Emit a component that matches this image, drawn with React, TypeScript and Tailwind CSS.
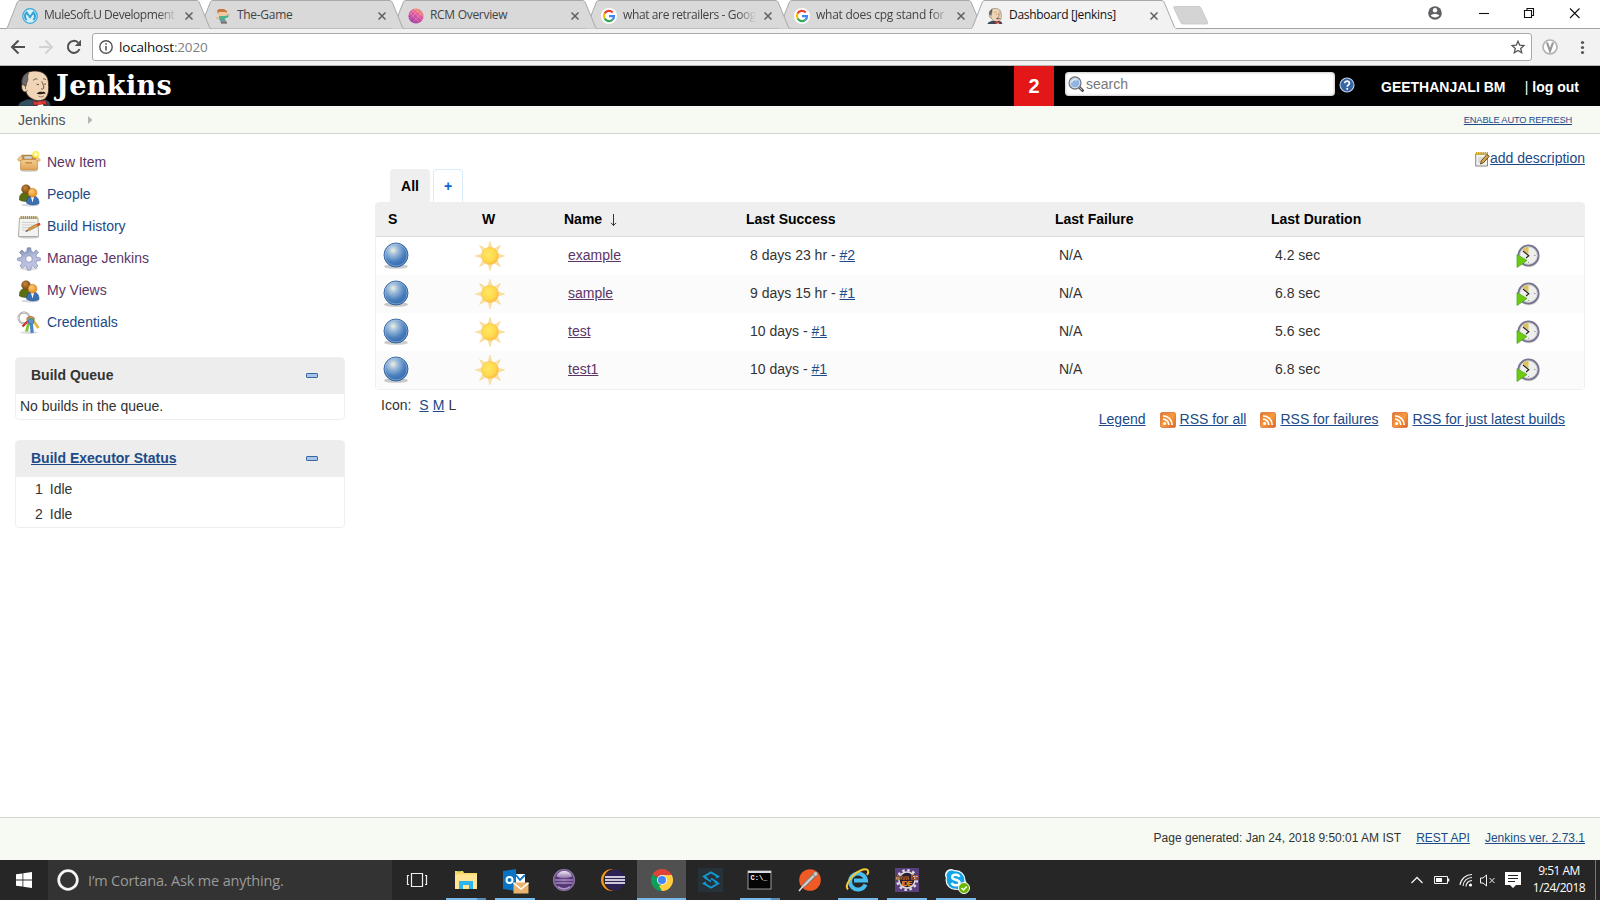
import type { ReactNode } from "react";

const JenkinsHead = ({ className, collar = true }: { className?: string; collar?: boolean }) => (
  <svg viewBox="0 0 33 36" className={className}>
    <path d="M0 36 L2 32.500 L9 29.500 L26 29 L31 31.500 L32.500 36Z" fill="#335061" stroke="#1b2a33" strokeWidth=".6" />
    <path d="M4 14 C2.500 5 10 .8 17 1 C26 1 30.500 6 30.500 14 C30.800 19 31 23 28.500 27 C26 31 19 31.500 15.500 29.500 C11 27.500 9 25 8 22 C4.500 22.500 2.800 18 4 14Z" fill="#f0d6b7" stroke="#33241c" strokeWidth=".8" />
    <path d="M4 14.500 C3.400 8 6.500 4.500 10.500 3 C8.500 7 11 9 9 12 C8.200 14 8.500 15.500 7.600 16.500 C6.500 14 5.500 14 4 14.500Z" fill="#6d6b6d" stroke="#2a2a2a" strokeWidth=".6" />
    <path d="M5 15.500 C6.500 14.500 7.800 16 7.500 19 M8 22 L9.500 20" fill="none" stroke="#49392a" strokeWidth=".7" />
    <path d="M15 10.500 C16.500 8.800 18 8.500 19.500 9.300 M25 9 C26.200 8.600 27.200 9 28 10 M18.500 14.200 L21 14.800 M25.800 14.200 L28 14 M23.800 11.500 C24.800 14 26.500 17 25.500 18.500 C24.500 19.500 23.500 19 23 18.700" fill="none" stroke="#4b3526" strokeWidth=".8" />
    <path d="M18.500 23.500 C20.500 21.500 23 21.500 24.500 22 C26.500 21.500 27.500 22.500 27.500 23.700 C25 23.500 21 25 18.500 23.500Z" fill="#2c2019" />
    <path d="M20.500 26 C22.500 27.500 25 27 26 25.500" fill="none" stroke="#7b4937" strokeWidth=".7" />
    {collar && <path d="M20 33 L24.500 33 L25.500 36 L19.500 36Z" fill="#fff" />}
    <path d="M14.500 31 L20.500 32 L27.500 30 L29 35 L24 34 L21.500 34.500 L16 35.500Z" fill="#d33833" stroke="#5f1512" strokeWidth=".5" />
    <rect x="20.500" y="31.500" width="3" height="3" fill="#ef3d3a" />
  </svg>
);

const MuleIcon = () => (
  <svg viewBox="0 0 16 16" className="size-4">
    <circle cx="8" cy="8" r="7.300" fill="#d7eef8" stroke="#35a9dc" strokeWidth="1.200" />
    <path d="M4.700 12 A5 5 0 0 1 4.600 4.500 L8 9.200 L11.400 4.500 A5 5 0 0 1 11.300 12" fill="none" stroke="#2f9fd4" strokeWidth="1.900" />
  </svg>
);

const GameIcon = () => (
  <svg viewBox="0 0 16 16" className="size-4">
    <path d="M2 2.500 L4 1 L9 1 L12 3 L12 5 L3 6Z" fill="#c9773f" />
    <rect x="3.500" y="4" width="8" height="4.200" fill="#f1c8a0" />
    <path d="M4 8 L10 8 L13.500 7 L13.500 9 L10 10.500 L10 12 L4 12Z" fill="#4cb08c" />
    <rect x="12" y="5.500" width="2.500" height="1.800" fill="#e9b98f" />
    <rect x="1" y="9" width="3.500" height="1.600" fill="#e9b98f" />
    <path d="M5 12 L10.500 12 L12 14.500 L5.500 14.500Z" fill="#7f8fa3" />
    <path d="M6 14.300 h6 v1.200 h-6z" fill="#5d5148" />
  </svg>
);

const RcmIcon = () => (
  <svg viewBox="0 0 16 16" className="size-4">
    <defs>
      <linearGradient id="rcm" x1=".8" y1="0" x2=".2" y2="1">
        <stop offset="0" stopColor="#f0a15a" />
        <stop offset=".4" stopColor="#e4589c" />
        <stop offset="1" stopColor="#9a3fa8" />
      </linearGradient>
    </defs>
    <circle cx="8" cy="8" r="7.600" fill="url(#rcm)" />
    <path d="M2 5 L11 14 M4 2.500 L14 12 M7 1 L15 8.500 M14 4 L5 14.500 M11 1.500 L2 11 M7.500 1 L1 7.500" stroke="#fff" strokeOpacity=".3" strokeWidth=".7" />
  </svg>
);

const GoogleIcon = () => (
  <svg viewBox="0 0 16 16" className="size-4">
    <circle cx="8" cy="8" r="8" fill="#fff" />
    <g fill="none" strokeWidth="2.200">
      <path d="M3.500 5.600 A5.100 5.100 0 0 1 11.700 4.400" stroke="#ea4335" />
      <path d="M3.600 10.500 A5.100 5.100 0 0 1 3.500 5.600" stroke="#fbbc05" />
      <path d="M11.500 11.800 A5.100 5.100 0 0 1 3.600 10.500" stroke="#34a853" />
      <path d="M8 8.200 H13 A5.100 5.100 0 0 1 11.500 11.800" stroke="#4285f4" />
    </g>
  </svg>
);

const fade = "[mask-image:linear-gradient(to_right,black_86%,transparent_100%)]";

const tabs: { title: string; icon: ReactNode; z: string; text: string; active?: boolean }[] = [
  { title: "MuleSoft.U Development", icon: <MuleIcon />, z: "z-[5]", text: `text-[#444] tracking-[-0.45px] ${fade}` },
  { title: "The-Game", icon: <GameIcon />, z: "z-[4]", text: "text-[#444] tracking-[-0.3px]" },
  { title: "RCM Overview", icon: <RcmIcon />, z: "z-[3]", text: "text-[#444] tracking-[-0.3px]" },
  { title: "what are retrailers - Goog", icon: <GoogleIcon />, z: "z-[2]", text: `text-[#444] tracking-[-0.38px] ${fade}` },
  { title: "what does cpg stand for", icon: <GoogleIcon />, z: "z-[1]", text: `text-[#444] tracking-[-0.26px] ${fade}` },
  { title: "Dashboard [Jenkins]", icon: <JenkinsHead className="size-4" />, z: "z-[6]", text: "text-[#111] tracking-[-0.3px]", active: true },
];

const TabStrip = () => (
  <div className="flex h-[29px] border-b border-[#a3a3a3] bg-white pl-1.5">
    {tabs.map((t) => (
      <div key={t.title} className={`relative flex h-[29px] w-[193px] shrink-0 items-center pl-4 ${t.z}`}>
        <svg viewBox="0 0 206 29" className="absolute left-0 top-0 h-[29px] w-[206px]">
          <path
            d="M0 28.500 C1 28.500 1.500 27.500 2 26 L11 3 C12 1 12.500 .5 14 .5 H190 C192 .5 192.500 1 193.500 3 L203 26 C203.500 27.500 204 28.500 205.500 28.500"
            fill={t.active ? "#f2f2f2" : "#d9d9d9"}
            stroke="#a9a9a9"
          />
          {t.active && <path d="M1 28.500 H204.500" stroke="#f2f2f2" strokeWidth="1.400" />}
        </svg>
        <span className="relative mt-0.5">{t.icon}</span>
        <span className={`relative ml-1.5 w-[133px] overflow-hidden whitespace-nowrap font-['Open_Sans',sans-serif] text-[12px] leading-4 ${t.text}`}>
          {t.title}
        </span>
        <svg viewBox="0 0 8 8" className="relative ml-2 mt-0.5 size-2 shrink-0">
          <path d="M.5 .5 L7.500 7.500 M7.500 .5 L.5 7.500" stroke="#5f5f5f" strokeWidth="1.500" />
        </svg>
      </div>
    ))}
    <svg viewBox="0 0 36 19" className="ml-[9px] mt-1.5 h-[19px] w-9">
      <path d="M2 .5 H25 C27 .5 27.500 1 28.500 3 L34.500 16 C35 17.500 34.500 18 33.500 18 H10.500 C9 18 8 17.500 7.500 16 L.8 2 C.5 1 1 .5 2 .5Z" fill="#d4d4d4" stroke="#c4c4c4" strokeWidth=".8" />
    </svg>
    <div className="ml-auto flex">
      <svg viewBox="0 0 166 28" className="h-7 w-[166px] overflow-visible">
        <circle cx="1" cy="13" r="6.800" fill="#5f6063" />
        <circle cx="1" cy="10.200" r="2.200" fill="#fff" />
        <path d="M-3.300 15.600 C-2.500 13.400 4.500 13.400 5.300 15.600 C4 18 -2 18 -3.300 15.600Z" fill="#fff" />
        <g fill="none" stroke="#111" strokeWidth="1.100">
          <path d="M45 13.500 H55" />
          <path d="M90.500 10.500 H97.500 V17.500 H90.500Z M93 10.500 V8.500 H99.500 V15.500 H97.500" />
          <path d="M136 8.500 L145.500 18 M145.500 8.500 L136 18" />
        </g>
      </svg>
    </div>
  </div>
);

const AddressBar = () => (
  <div className="flex h-[37px] items-center border-b border-[#b6b6b6] bg-[#f2f2f2]">
    <svg viewBox="0 0 92 36" className="h-9 w-[92px] shrink-0" fill="none" strokeWidth="2">
      <path d="M25 18 H12.500 M18.500 11.500 L12 18 L18.500 24.500" stroke="#505050" />
      <path d="M39 18 H52 M45.500 11.500 L52 18 L45.500 24.500" stroke="#d2d2d2" />
      <path d="M79.500 20 A6 6 0 1 1 78 13.500" stroke="#505050" />
      <path d="M81 10.800 V17 H74.800Z" fill="#505050" stroke="none" />
    </svg>
    <div className="flex h-7 w-[1440px] shrink-0 items-center rounded-[3px] border border-[#a9a9a9] bg-white pl-1.5 pr-1.5">
      <svg viewBox="0 0 14 14" className="size-[14px]">
        <circle cx="7" cy="7" r="6.200" fill="none" stroke="#555" strokeWidth="1.400" />
        <path d="M7 6 V10.500 M7 3.200 V4.800" stroke="#555" strokeWidth="1.600" />
      </svg>
      <span className="ml-1.5 font-['Open_Sans',sans-serif] text-[13.500px] leading-[18px] tracking-[-0.18px] text-[#111]">
        localhost<span className="text-[#808080]">:2020</span>
      </span>
      <svg viewBox="0 0 14 14" className="ml-auto size-[14px]">
        <path d="M7 1.200 L8.700 5.200 L13 5.600 L9.700 8.400 L10.700 12.700 L7 10.400 L3.300 12.700 L4.300 8.400 L1 5.600 L5.300 5.200Z" fill="none" stroke="#555" strokeWidth="1.300" />
      </svg>
    </div>
    <svg viewBox="0 0 68 36" className="h-9 w-[68px]">
      <circle cx="18" cy="18" r="7" fill="#fff" stroke="#b3b3b3" strokeWidth="1.700" />
      <path d="M15 13.500 L18 22 L21 13.500" fill="none" stroke="#989898" strokeWidth="2.200" />
      <g fill="#555">
        <circle cx="50.500" cy="13.500" r="1.600" />
        <circle cx="50.500" cy="18.500" r="1.600" />
        <circle cx="50.500" cy="23.500" r="1.600" />
      </g>
    </svg>
  </div>
);

const Header = () => (
  <header className="flex h-10 bg-black text-white">
    <JenkinsHead className="ml-[18px] mt-1 h-9 w-[33px] shrink-0" />
    <span className="ml-[5px] w-[125px] pt-px font-['DejaVu_Serif',serif] text-[27px] font-bold leading-[37px] tracking-[0.4px]">Jenkins</span>
    <span className="ml-auto flex size-10 items-center justify-center bg-[#e31717] text-[20px] font-bold">2</span>
    <div className="ml-[11px] mt-1.5 flex h-6 w-[270px] items-center rounded bg-white pl-[3px] shadow-[inset_0_0_3px_#999]">
      <svg viewBox="0 0 16 16" className="size-4">
        <path d="M10.500 10.500 L14.500 14.500" stroke="#555" strokeWidth="3" strokeLinecap="round" />
        <path d="M11 11 L14 14" stroke="#bbb" strokeWidth="1" />
        <circle cx="7" cy="7" r="6" fill="#8fb4de" stroke="#777" strokeWidth="1.300" />
        <circle cx="7" cy="7" r="4.800" fill="none" stroke="#dfe9f4" strokeWidth=".9" />
        <path d="M3.500 6.500 C4 4 7 3 9 4.200" fill="none" stroke="#e5effa" strokeWidth="1.400" />
      </svg>
      <span className="ml-[2px] text-[14px] leading-4 text-[#777]">search</span>
    </div>
    <svg viewBox="0 0 16 16" className="ml-1 mt-[11px] size-4">
      <circle cx="8" cy="8" r="7" fill="#3465a4" stroke="#c3d3e8" strokeWidth="1.100" />
      <path d="M5.700 6.200 C5.700 3.300 10.500 3.400 10.400 6.200 C10.400 7.900 8.200 8 8.200 9.800 M8.200 11 V12.700" fill="none" stroke="#fff" strokeWidth="1.700" />
    </svg>
    <div className="ml-[26px] mr-[21px] flex w-[198px] justify-between pt-[13px] text-[14px] font-bold leading-4">
      <span>GEETHANJALI BM</span>
      <span>
        <span className="font-normal">|</span> log out
      </span>
    </div>
  </header>
);

const People = () => (
  <>
    <ellipse cx="13" cy="22" rx="9" ry="1.500" fill="#000" opacity=".15" />
    <path d="M2.500 17 C2 11.500 5 9.500 8.500 9.500 C11 9.500 14 12 14 17.500 C10 19 5 18.500 2.500 17Z" fill="#5a6e14" stroke="#3f4d0b" strokeWidth=".6" />
    <circle cx="9" cy="6.200" r="4.400" fill="url(#brownHead)" stroke="#70430c" strokeWidth=".5" />
    <path d="M9.500 20 C9.500 14.500 12 13 15.500 13 C20 13 22 15.500 22 20.500 C18 22.500 13 22.500 9.500 20Z" fill="#3a70b3" stroke="#1f4a87" strokeWidth=".6" />
    <path d="M14 14 L15.500 19.500 L17 14Z" fill="#fff" />
    <circle cx="15.500" cy="9.700" r="4.400" fill="url(#orangeHead)" stroke="#c87408" strokeWidth=".5" />
  </>
);

const sideIcons: Record<string, ReactNode> = {
  box: (
    <>
      <ellipse cx="12" cy="19.800" rx="9" ry="1.300" fill="#000" opacity=".15" />
      <path d="M5 4 H19.500 L21 9 H3Z" fill="#c98a3e" stroke="#b57d35" strokeWidth=".5" />
      <path d="M7 5 H15 V8 H7Z" fill="#dcd8d0" stroke="#85796a" strokeWidth=".5" />
      <path d="M3.500 8.500 H20.500 V18 Q20.500 19 19.500 19 H4.500 Q3.500 19 3.500 18Z" fill="url(#boxFace)" stroke="#bd8238" strokeWidth=".6" />
      <path d="M5 4 L.5 8 L1.500 10 L5.500 9 Z M19.500 5 L23.500 9 L22 10.500 L18.500 9Z" fill="#f0c78b" stroke="#bd8238" strokeWidth=".5" />
      <path d="M8.500 11 H15 V12.600 H8.500Z" fill="#c98d48" />
      <circle cx="18.700" cy="3.500" r="3.600" fill="#fdf23a" opacity=".85" />
      <circle cx="18.700" cy="3.500" r="1.700" fill="#fffde0" />
    </>
  ),
  people: <People />,
  note: (
    <>
      <ellipse cx="12" cy="22.300" rx="10" ry="1.200" fill="#000" opacity=".2" />
      <path d="M2.500 3 H21 L21.500 21.500 H1.500Z" fill="#f3f3f1" stroke="#999b96" strokeWidth=".8" />
      <path d="M3.500 2.500 H20.500" stroke="#a8923a" strokeWidth="2.800" strokeDasharray="1.400 .7" />
      <path d="M5 7.500 H18 M5 10 H18 M5 12.500 H14 M5 15 H10" stroke="#c4c4c4" strokeWidth=".8" />
      <path d="M9.500 16 L12 13 L20 8.800 L21.200 11 L13 15.300Z" fill="#d59a45" stroke="#8a6122" strokeWidth=".5" />
      <path d="M20 8.800 L22.800 7.800 L23.500 10 L21.200 11.200Z" fill="#e23b2e" />
      <path d="M8 17 L10.200 15 L10.700 16.200Z" fill="#333" />
    </>
  ),
  gear: (
    <>
      <ellipse cx="12" cy="21.500" rx="9" ry="1.800" fill="#000" opacity=".13" />
      <path
        fillRule="evenodd"
        d="M10.300 .8 H13.700 L14.300 4.500 L16.500 5.500 L19.200 3 L21.500 5.300 L19 8.200 L19.800 10.500 L23.300 11 V13.500 L19.800 14 L18.800 16 L21 19 L18.700 21.200 L16 18.800 L14.300 19.500 L13.700 23.200 H10.300 L9.700 19.500 L8 18.800 L5.300 21.200 L3 19 L5.200 16 L4.200 14 L.7 13.500 V11 L4.200 10.500 L5 8.200 L2.500 5.300 L4.800 3 L7.500 5.500 L9.700 4.500Z M12 8.700 A3.300 3.300 0 1 0 12 15.300 A3.300 3.300 0 1 0 12 8.700Z"
        fill="url(#gearFill)"
        stroke="#7d88ad"
        strokeWidth=".7"
      />
    </>
  ),
  keys: (
    <>
      <ellipse cx="12" cy="21.500" rx="9" ry="1.500" fill="#000" opacity=".13" />
      <circle cx="7" cy="7" r="5.500" fill="none" stroke="#8b8d89" strokeWidth="1.800" />
      <circle cx="7" cy="7" r="5.500" fill="none" stroke="#f0f0f0" strokeWidth=".8" />
      <path d="M15 8 L21.500 17" stroke="#e0b73c" strokeWidth="2.800" />
      <path d="M12 9 L5.500 15.500" stroke="#d8342b" strokeWidth="2.400" />
      <path d="M12 11 L9.500 20.500" stroke="#7ac529" strokeWidth="2.800" />
      <path d="M9.500 8.500 A4.500 4.500 0 0 1 17.500 8" fill="none" stroke="#d8583b" strokeWidth="1.500" />
      <path d="M10.200 9.500 A4 4 0 0 1 17.500 9.500" fill="none" stroke="#8bc43c" strokeWidth="1.800" />
      <circle cx="14" cy="10.500" r="2.900" fill="#5d93d3" stroke="#346199" strokeWidth=".6" />
      <path d="M14.300 12 L15.200 22" stroke="#4d84c6" strokeWidth="3.200" />
    </>
  ),
};

const links = [
  ["New Item", "box", true],
  ["People", "people", false],
  ["Build History", "note", false],
  ["Manage Jenkins", "gear", true],
  ["My Views", "people", true],
  ["Credentials", "keys", false],
] as const;

const Collapse = () => (
  <svg viewBox="0 0 12 5" className="mr-[26px] h-[5px] w-3">
    <rect x=".5" y=".5" width="11" height="4" rx=".6" fill="#a9c4e6" stroke="#3465a4" />
  </svg>
);

const Sidebar = () => (
  <aside className="w-[375px] shrink-0 pt-3">
    <nav>
      {links.map(([label, icon, visited]) => (
        <div key={label} className="flex h-8 items-center pl-[17px]">
          <svg viewBox="0 0 24 24" className="mt-px size-6">
            {sideIcons[icon]}
          </svg>
          <a className={`ml-1.5 leading-4 ${visited ? "text-[#5c3566]" : "text-[#204a87]"}`}>{label}</a>
        </div>
      ))}
    </nav>
    <section className="ml-[15px] mt-[19px] h-[63px] w-[330px] rounded border border-[#efefef]">
      <div className="flex h-[36px] items-center justify-between bg-[#ededed] pb-0.5 pl-[15px] font-bold">
        <span className="leading-4">Build Queue</span>
        <Collapse />
      </div>
      <div className="pl-1 pt-1 leading-4">No builds in the queue.</div>
    </section>
    <section className="ml-[15px] mt-5 h-[88px] w-[330px] rounded border border-[#efefef]">
      <div className="flex h-[36px] items-center justify-between bg-[#ededed] pb-0.5 pl-[15px] font-bold">
        <a className="leading-4 text-[#204a87] underline">Build Executor Status</a>
        <Collapse />
      </div>
      {["1", "2"].map((n) => (
        <div key={n} className="flex h-[25px] items-center gap-[7px] pb-0.5 pl-[19px] leading-4">
          <span>{n}</span>
          <span>Idle</span>
        </div>
      ))}
    </section>
  </aside>
);

const Ball = () => (
  <svg viewBox="0 0 26 28" className="h-7 w-[26px]">
    <ellipse cx="13" cy="24.500" rx="12" ry="2.300" fill="#000" opacity=".2" />
    <circle cx="13" cy="13" r="12" fill="url(#ball)" stroke="#2d5f9e" strokeWidth=".9" />
    <circle cx="13" cy="13" r="11" fill="none" stroke="#b8d0ea" strokeOpacity=".5" strokeWidth=".9" />
  </svg>
);

const Sun = () => (
  <svg viewBox="0 0 30 30" className="size-[30px]">
    {[0, 45, 90, 135, 180, 225, 270, 315].map((a) => (
      <path key={a} d="M12.700 8 L15 .3 L17.300 8Z" fill="#fbe3a4" stroke="#f3cd7c" strokeWidth=".5" transform={`rotate(${a} 15 15)`} />
    ))}
    <circle cx="15" cy="15" r="8.500" fill="url(#sun)" stroke="#fbc65b" strokeWidth=".8" />
  </svg>
);

const BuildNow = () => (
  <svg viewBox="0 0 24 26" className="h-[26px] w-6">
    <circle cx="12.800" cy="13.500" r="10.800" fill="#000" opacity=".13" />
    <circle cx="12.500" cy="12.500" r="10" fill="#eeeeec" stroke="#77758f" strokeWidth="2" />
    <circle cx="12.500" cy="12.500" r="8.700" fill="none" stroke="#c9c9cf" strokeWidth=".8" />
    <path d="M12.500 11.500 L6.500 6.500 C8.500 4.500 10.500 4 12.500 4Z" fill="#dcc35a" />
    <path d="M7 8 L12.800 12.800 L10 15" fill="none" stroke="#222" strokeWidth="1.100" />
    <path d="M18 12.500 h1.500 M12.500 19 v1" stroke="#999" strokeWidth="1" />
    <path d="M1 11.500 L11 17.500 L1 24.500Z" fill="#6ccc12" stroke="#4ba014" strokeWidth=".7" />
  </svg>
);

const jobs = [
  ["example", "8 days 23 hr - ", "#2", "4.2 sec"],
  ["sample", "9 days 15 hr - ", "#1", "6.8 sec"],
  ["test", "10 days - ", "#1", "5.6 sec"],
  ["test1", "10 days - ", "#1", "6.8 sec"],
];

const Rss = () => (
  <svg viewBox="0 0 16 16" className="size-4">
    <rect x=".4" y=".4" width="15.200" height="15.200" rx="2" fill="url(#rss)" stroke="#d9692c" strokeWidth=".8" />
    <circle cx="4.600" cy="11.500" r="1.500" fill="#fff" />
    <path d="M3 7.200 A5.800 5.800 0 0 1 8.800 13 M3 3.800 A9.200 9.200 0 0 1 12.200 13" fill="none" stroke="#fff" strokeWidth="1.700" />
  </svg>
);

const cols = "grid grid-cols-[93px_83px_181px_309px_216px_1fr_68px]";

const Main = () => (
  <main className="w-[1210px]">
    <div className="flex h-[35px] items-end justify-end">
      <div className="flex h-[19px]">
        <svg viewBox="0 0 15 16" className="mt-px h-4 w-[15px]">
          <path d="M.7 3 H12.500 V15 H.7Z" fill="#f1f1ee" stroke="#777" strokeWidth=".9" />
          <path d="M.8 2.500 H13" stroke="#d0a51f" strokeWidth="3" strokeDasharray="1.600 .6" />
          <path d="M3 7 H9 M3 9 H8 M3 11 H6" stroke="#bbb" strokeWidth=".8" />
          <path d="M5.500 13 L6.300 9.800 L12 3.500 L14.300 5.300 L8.500 11.700Z" fill="#d9a648" stroke="#5c3f10" strokeWidth=".9" />
        </svg>
        <a className="leading-4 text-[#204a87] underline">add description</a>
      </div>
    </div>
    <div className="flex h-[33px] gap-[3px] pl-[15px] font-bold">
      <div className="flex w-10 items-center justify-center rounded-t bg-[#efefef] pt-px text-black">All</div>
      <div className="flex w-[30px] items-center justify-center rounded-t border border-b-0 border-[#d9edfb] text-[#0b63d6]">+</div>
    </div>
    <div className="rounded border border-[#efefef]">
      <div className={`${cols} h-[34px] items-center border-b border-[#dcdcdc] bg-[#efefef] pb-0.5 pl-[13px] font-bold leading-4 text-black`}>
        <span className="-ml-px">S</span>
        <span>W</span>
        <span className="-ml-px flex gap-2">
          Name
          <svg viewBox="0 0 7 14" className="mt-0.5 h-3.5 w-[7px]" fill="none" stroke="#333">
            <path d="M3.500 1 V12.500 M1 9.800 L3.500 12.500 L6 9.800" />
          </svg>
        </span>
        <span>Last Success</span>
        <span>Last Failure</span>
        <span>Last Duration</span>
      </div>
      {jobs.map(([name, ago, build, dur]) => (
        <div key={name} className={`${cols} h-[38px] items-center pl-[13px] leading-4 even:bg-white odd:bg-[#fbfbfb]`}>
          <div className="-ml-1.5">
            <Ball />
          </div>
          <div className="-ml-[7px]">
            <Sun />
          </div>
          <a className="ml-[3px] pb-0.5 text-[#5c3566] underline">{name}</a>
          <span className="ml-1 whitespace-pre pb-0.5">
            {ago}
            <a className="text-[#204a87] underline">{build}</a>
          </span>
          <span className="ml-1 pb-0.5">N/A</span>
          <span className="ml-1 pb-0.5">{dur}</span>
          <BuildNow />
        </div>
      ))}
    </div>
    <div className="flex h-[60px] justify-between pl-1.5 leading-4">
      <div className="flex gap-1 pt-[7px]">
        <span className="mr-1">Icon:</span>
        <a className="text-[#204a87] underline">S</a>
        <a className="text-[#204a87] underline">M</a>
        <span>L</span>
      </div>
      <div className="flex gap-[14px] pr-5 pt-[21px] text-[#204a87]">
        <a className="underline">Legend</a>
        {["RSS for all", "RSS for failures", "RSS for just latest builds"].map((t) => (
          <span key={t} className="flex gap-1">
            <span className="mt-px">
              <Rss />
            </span>
            <a className="underline">{t}</a>
          </span>
        ))}
      </div>
    </div>
  </main>
);

const taskIcons: { icon: ReactNode; bar?: boolean; tail?: boolean; active?: boolean }[] = [
  { icon: <g fill="none" stroke="#eee" strokeWidth="1.200"><path d="M6.500 5.500 H17.500 V18.500 H6.500Z M4 7.500 H2.500 V16.500 H4 M20 7.500 H21.500 V16.500 H20" /></g> },
  {
    bar: true, tail: true,
    icon: <><path d="M1 3 H9 L10 5 H23 V21 H1Z" fill="#fbd968" /><path d="M1 6.500 H23 V21 H1Z" fill="#fee493" /><path d="M3 3.700 h4" stroke="#8ac34a" /><path d="M5 13 H19 V21 H15 V17 H9 V21 H5Z" fill="#2bb4f0" /></>,
  },
  {
    bar: true,
    icon: <><path d="M0 3 L13 1 V23 L0 21Z" fill="#0872c4" /><path d="M13 6 H22 V17 H13Z" fill="#fff" /><path d="M13 7 L17 12 L22 7" fill="none" stroke="#0872c4" strokeWidth="1.800" /><circle cx="6.500" cy="12" r="3" fill="none" stroke="#fff" strokeWidth="2" /><path d="M10.500 14.500 H25.500 V25.500 H10.500Z" fill="#e9b26d" /><path d="M10.500 14.800 L18 21 L25.500 14.800" fill="none" stroke="#fff" strokeWidth="1.500" /></>,
  },
  { icon: <><circle cx="12" cy="12" r="11" fill="url(#purple)" /><path d="M4.500 8.500 C6 1.500 18 1 20 8.500 C15 10.500 9 10.500 4.500 8.500Z" fill="url(#gloss)" /><path d="M3 12 H21 M3.500 15 H20.500" stroke="#eadcf2" strokeWidth="1.100" opacity=".75" /><path d="M6 18.500 C9 21.500 15 21.500 18 18.500" fill="none" stroke="#d9c6e6" strokeWidth="1.500" opacity=".7" /></> },
  { icon: <><circle cx="11" cy="12" r="11" fill="#f7941e" /><circle cx="13.500" cy="12" r="11" fill="#262626" /><circle cx="14" cy="12" r="10.300" fill="#2c2255" /><path d="M4 9 H24 M4 12 H24 M4 15 H24" stroke="#fff" strokeWidth="1.500" /></> },
  {
    bar: true, active: true,
    icon: <><path d="M12 12 L2.470 6.500 A11 11 0 0 1 21.530 6.500Z" fill="#db4437" /><path d="M12 12 L21.530 6.500 A11 11 0 0 1 12 23Z" fill="#ffcd40" /><path d="M12 12 L12 23 A11 11 0 0 1 2.470 6.500Z" fill="#0f9d58" /><path d="M12 7 H21.700 L16.300 14.500Z" fill="#ffcd40" /><path d="M12 7 H21.700 L21 5.700 H10Z" fill="#db4437" /><path d="M16.300 14.500 L12 23 L9 18Z" fill="#ffcd40" /><circle cx="12" cy="12" r="5" fill="#f1f1f1" /><circle cx="12" cy="12" r="4" fill="#4285f4" /></>,
  },
  { icon: <><rect x="-1" y="0" width="25" height="24" fill="#263238" /><g fill="none" stroke="#1495cf" strokeWidth="2"><path d="M8.500 10.500 L5 8.500 L12 4.500 L19 8.500 L17 9.600" /><path d="M15.500 13.500 L19 15.500 L12 19.500 L5 15.500 L7 14.400" /><path d="M5.500 9.500 L12 13.500 M12 10.500 L18.500 14.500" strokeWidth="1.600" /></g></> },
  {
    bar: true, tail: true,
    icon: <><rect x="0" y="3" width="23" height="18" fill="#050505" stroke="#9a9a9a" /><path d="M0 4 H23" stroke="#d8dce2" strokeWidth="2" /><text x="2.500" y="12" fontSize="7" fill="#fff" fontFamily="Liberation Mono" fontWeight="bold">C:\_</text></>,
  },
  { icon: <><circle cx="13" cy="12" r="10.800" fill="#f15a24" /><path d="M2 23 L12 11" stroke="#ddd" strokeWidth="1.500" /><path d="M6.500 18 L18 6.500" stroke="#7a7a7a" strokeWidth="4" /><path d="M6.500 18 L18 6.500" stroke="#d3cfcc" strokeWidth="2.300" /><circle cx="18.500" cy="6" r="2.300" fill="#ccc" stroke="#666" strokeWidth=".6" /></> },
  {
    bar: true,
    icon: <><path d="M19.500 16.500 A8 8 0 1 1 20 12.500 H8" fill="none" stroke="#49bdf0" strokeWidth="4" /><path d="M2 21.500 C-2 18 6 5 17 1.500 C23 0 23 4 21 7" fill="none" stroke="#f7c934" strokeWidth="2" /></>,
  },
  {
    bar: true,
    icon: <><rect width="24" height="24" fill="#5b4080" /><circle cx="12" cy="12" r="9.800" fill="none" stroke="#ddd" strokeWidth="2.500" strokeDasharray="2.500 2.630" /><circle cx="12" cy="12" r="8" fill="#2b1d35" stroke="#ddd" strokeWidth="1.600" /><text x="0" y="11.500" fontSize="7" textLength="24" lengthAdjust="spacingAndGlyphs" fontWeight="bold" fill="#f28c28" stroke="#4a2410" strokeWidth=".3" fontFamily="Liberation Sans">Java EE</text><text x="6.500" y="18" fontSize="7.500" textLength="11" fontWeight="bold" fill="#f28c28" fontFamily="Liberation Sans">IDE</text></>,
  },
  {
    bar: true,
    icon: <><circle cx="7" cy="7" r="6" fill="#fff" /><circle cx="16" cy="16" r="6.500" fill="#fff" /><circle cx="11.500" cy="12" r="10" fill="#fff" /><circle cx="7.500" cy="7.500" r="5" fill="#12a5e8" /><circle cx="15.500" cy="16" r="5.500" fill="#12a5e8" /><circle cx="11.500" cy="12" r="8.800" fill="#12a5e8" /><path d="M15.300 8.800 C14.300 6 8.200 6 8.200 9.200 C8.200 12.500 15.600 11 15.600 14.700 C15.600 18 8.700 18 7.700 14.800" fill="none" stroke="#fff" strokeWidth="2.400" /><circle cx="20" cy="20" r="5.500" fill="#6bb700" stroke="#fff" /><path d="M17.500 20 L19.500 22 L22.700 18.500" fill="none" stroke="#fff" strokeWidth="1.500" /></>,
  },
];

const Taskbar = () => (
  <div className="flex h-10 bg-[#262626] text-white">
    <div className="flex w-12 items-center justify-center">
      <svg viewBox="0 0 16 16" className="size-4" fill="#fff">
        <path d="M0 2.300 L6.500 1.400 V7.600 H0Z M7.300 1.300 L16 0 V7.600 H7.300Z M0 8.400 H6.500 V14.600 L0 13.700Z M7.300 8.400 H16 V16 L7.300 14.700Z" />
      </svg>
    </div>
    <div className="flex w-[344px] items-center bg-[#333] pl-[9px]">
      <svg viewBox="0 0 22 22" className="size-[22px]">
        <circle cx="11" cy="11" r="9.300" fill="none" stroke="#f4f4f4" strokeWidth="2.700" />
      </svg>
      <span className="ml-[9px] mt-0.5 font-['Open_Sans',sans-serif] text-[14.500px] leading-5 tracking-[-0.17px] text-[#9a9a9a]">I’m Cortana. Ask me anything.</span>
    </div>
    <div className="flex">
      {taskIcons.map((t, i) => (
        <div key={i} className={`flex w-[49px] flex-col items-center ${t.active ? "bg-[#505050]" : ""}`}>
          <svg viewBox="0 0 24 24" className="mt-2 size-6 overflow-visible">
            {t.icon}
          </svg>
          {t.bar && (
            <div className={`mt-auto flex h-0.5 bg-[#76b9ed] ${t.active ? "w-full" : "w-10"}`}>
              {t.tail && <span className="ml-auto w-[9px] bg-[#5a8bb3]" />}
            </div>
          )}
        </div>
      ))}
    </div>
    <svg viewBox="0 0 120 40" className="ml-auto h-10 w-[120px]" fill="none" stroke="#f2f2f2">
      <path d="M6.500 23 L12 17.500 L17.500 23" strokeWidth="1.300" />
      <path d="M29.500 16.500 H42.500 V23.500 H29.500Z" />
      <path d="M31 18 H37 V22 H31Z" fill="#fff" stroke="none" />
      <path d="M43.500 18.500 V21.500" strokeWidth="1.600" />
      <path d="M55 25 A12 12 0 0 1 67 14.500 M58 26 A9 9 0 0 1 67 17.500 M61 26.500 A6 6 0 0 1 67 20.500" strokeWidth="1.100" />
      <circle cx="65.500" cy="25" r="1.600" fill="#fff" stroke="none" />
      <path d="M75.500 18 H78 L81.500 15 V26 L78 23 H75.500Z M84.500 18 L89.500 23 M89.500 18 L84.500 23" />
      <path d="M100 12 H116 V25 H111 L108 28 L105 25 H100Z" fill="#fff" stroke="none" />
      <path d="M103 15.500 H113 M103 18.500 H113 M103 21.500 H110" stroke="#262626" />
    </svg>
    <div className="ml-[3px] mr-[5px] flex w-[62px] flex-col items-center pt-0.5 font-['Open_Sans',sans-serif] text-[12px] leading-[17px] tracking-[-0.5px]">
      <span>9:51 AM</span>
      <span>1/24/2018</span>
    </div>
    <div className="w-[5px] border-l border-[#777]" />
  </div>
);

const Gradients = () => (
  <svg className="absolute size-0" aria-hidden="true">
    <defs>
      <radialGradient id="ball" cx=".38" cy=".3" r=".75">
        <stop offset="0" stopColor="#eef1dc" />
        <stop offset=".25" stopColor="#a3bfdc" />
        <stop offset=".65" stopColor="#4a7fbe" />
        <stop offset="1" stopColor="#2f66a8" />
      </radialGradient>
      <radialGradient id="sun" cx=".4" cy=".4" r=".7">
        <stop offset="0" stopColor="#ffe965" />
        <stop offset=".6" stopColor="#ffd84c" />
        <stop offset="1" stopColor="#fcb040" />
      </radialGradient>
      <radialGradient id="brownHead" cx=".4" cy=".35">
        <stop offset="0" stopColor="#c58a45" />
        <stop offset="1" stopColor="#8a5610" />
      </radialGradient>
      <radialGradient id="orangeHead" cx=".4" cy=".35">
        <stop offset="0" stopColor="#fbc983" />
        <stop offset="1" stopColor="#ec9a30" />
      </radialGradient>
      <linearGradient id="boxFace" x1="0" y1="0" x2="0" y2="1">
        <stop offset="0" stopColor="#f3cd92" />
        <stop offset="1" stopColor="#dfa356" />
      </linearGradient>
      <linearGradient id="gearFill" x1="0" y1="0" x2=".3" y2="1">
        <stop offset="0" stopColor="#7183ab" />
        <stop offset=".5" stopColor="#b3bcdb" />
        <stop offset="1" stopColor="#c3c3e4" />
      </linearGradient>
      <linearGradient id="rss" x1="0" y1="0" x2="1" y2="1">
        <stop offset="0" stopColor="#e2742f" />
        <stop offset=".5" stopColor="#f79a3c" />
        <stop offset="1" stopColor="#d9632a" />
      </linearGradient>
      <radialGradient id="purple">
        <stop offset="0" stopColor="#6d4b8f" />
        <stop offset=".75" stopColor="#4e3070" />
        <stop offset="1" stopColor="#9c84b5" />
      </radialGradient>
      <linearGradient id="gloss" x1="0" y1="0" x2="0" y2="1">
        <stop offset="0" stopColor="#efe6f5" />
        <stop offset="1" stopColor="#8f73a8" />
      </linearGradient>
    </defs>
  </svg>
);

export default function App() {
  return (
    <div className="flex h-[900px] w-[1600px] flex-col overflow-hidden bg-white font-['Liberation_Sans',Arial,sans-serif] text-[14px] text-[#333]">
      <Gradients />
      <TabStrip />
      <AddressBar />
      <Header />
      <div className="flex h-7 items-center border-b border-[#d3d7cf] bg-[#f6faf2] pl-[18px] pr-7">
        <span className="leading-4 text-[#4d545d]">Jenkins</span>
        <svg viewBox="0 0 5 8" className="ml-[23px] h-2 w-[5px]">
          <path d="M0 0 L4.500 4 L0 8Z" fill="#b5b5b5" />
        </svg>
        <a className="ml-auto text-[9.300px] leading-4 tracking-[-0.17px] text-[#204a87] underline">ENABLE AUTO REFRESH</a>
      </div>
      <div className="flex grow">
        <Sidebar />
        <Main />
      </div>
      <footer className="flex h-[43px] items-center justify-end gap-[15px] border-t border-[#d3d7cf] bg-[#f6faf2] pb-0.5 pr-[15px] text-[12px]">
        <span>Page generated: Jan 24, 2018 9:50:01 AM IST</span>
        <a className="text-[#204a87] underline">REST API</a>
        <a className="text-[#204a87] underline">Jenkins ver. 2.73.1</a>
      </footer>
      <Taskbar />
    </div>
  );
}
